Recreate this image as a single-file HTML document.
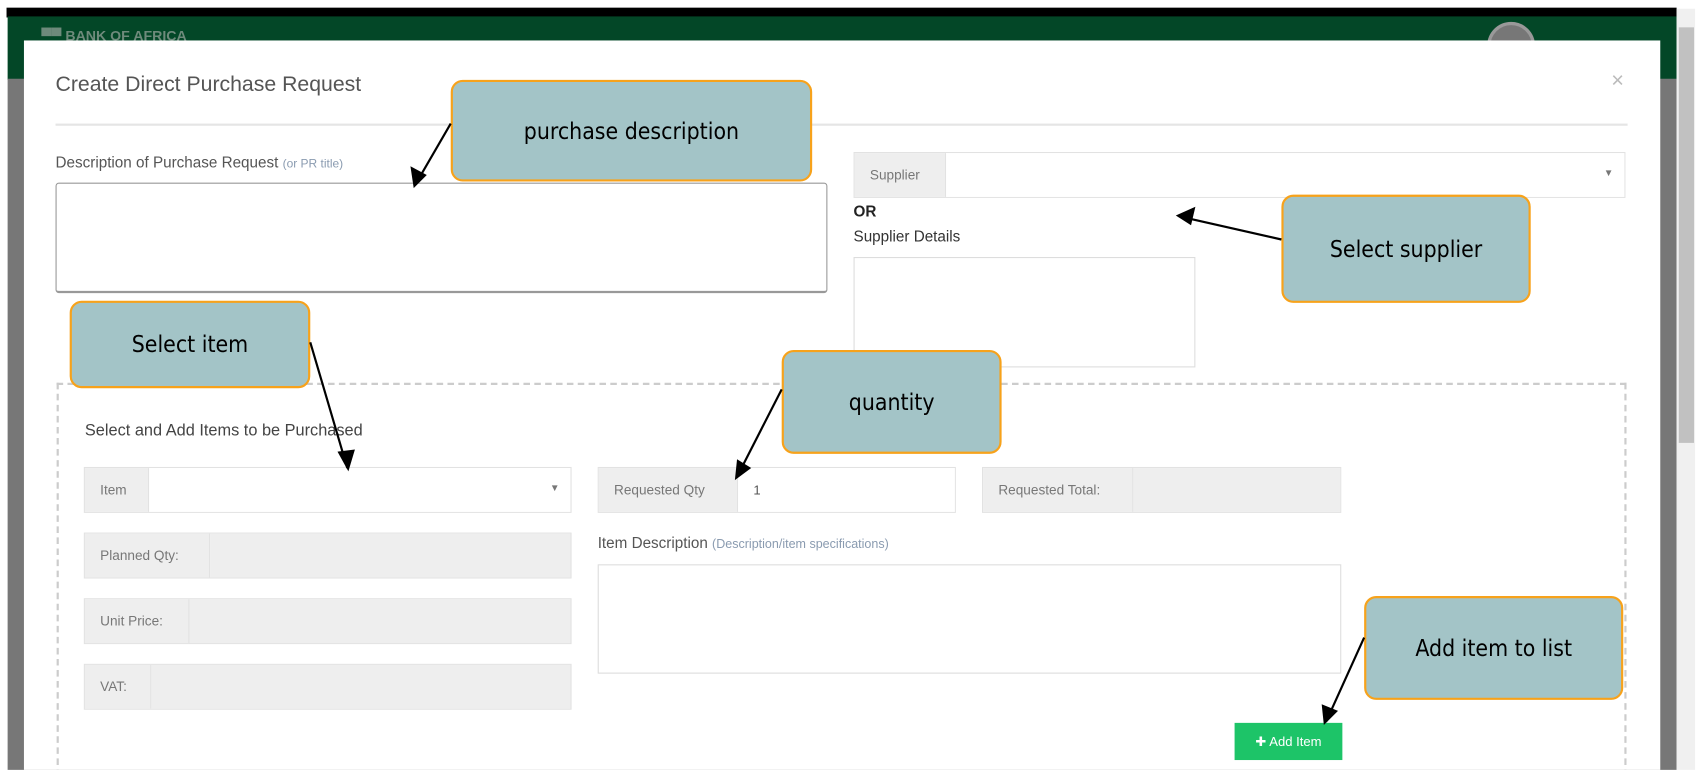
<!DOCTYPE html>
<html><head><meta charset="utf-8"><style>
html,body{margin:0;padding:0;overflow:hidden;background:#fff;width:1707px;height:771px}
#s{position:absolute;left:0;top:0;width:1568px;height:704px;overflow:hidden;transform:scale(1.0887,1.0936);transform-origin:0 0;font-family:"Liberation Sans",sans-serif}
.a{position:absolute;box-sizing:border-box}
.lbl{color:#555;font-size:14px}
.grp{position:absolute;display:flex;border:1px solid #e2e2e2;box-sizing:border-box;height:42px}
.ad{background:#eee;color:#777;font-size:12.5px;display:flex;align-items:center;padding-left:14px;box-sizing:border-box;border-right:1px solid #e2e2e2}
.in{flex:1;background:#fff}
.gin{flex:1;background:#eee}
.co{position:absolute;background:#a3c4c7;border:2px solid #f7a21b;border-radius:11px;box-sizing:border-box;display:flex;align-items:center;justify-content:center;font-size:21px;color:#000;font-family:"DejaVu Sans Condensed","Liberation Sans Narrow","Liberation Sans",sans-serif}
</style></head><body><div id="s">
<div class="a" style="left:6px;top:7px;width:1534px;height:9px;background:#000"></div>
<div class="a" style="left:7px;top:15px;width:1533px;height:58px;background:#034727"></div>
<div class="a" style="left:7px;top:72px;width:1533px;height:640px;background:#777"></div>
<div class="a" style="left:38px;top:25px;color:#6e8a7b;font-size:13px;font-weight:bold">▀▀ BANK OF AFRICA</div>
<div class="a" style="left:1366px;top:20px;width:44px;height:44px;border-radius:50%;background:#777;border:3px solid #999"></div>
<div class="a" style="left:1540px;top:8px;width:17px;height:700px;background:#f0f0f0"></div>
<div class="a" style="left:1542px;top:25px;width:14px;height:380px;background:#c1c1c1"></div>
<div class="a" style="left:22px;top:37px;width:1503px;height:680px;background:#fff"></div>
<div class="a" style="left:51px;top:66px;font-size:19.5px;color:#555">Create Direct Purchase Request</div>
<div class="a" style="left:1480px;top:63px;font-size:20px;color:#bbb">×</div>
<div class="a" style="left:51px;top:113px;width:1444px;height:2px;background:#e5e5e5"></div>
<div class="a lbl" style="left:51px;top:140px">Description of Purchase Request <span style="font-size:11px;color:#8a9bb0">(or PR title)</span></div>
<div class="a" style="left:51px;top:167px;width:709px;height:101px;border:1.5px solid #999;border-radius:3px;border-bottom-width:2px"></div>
<div class="grp" style="left:784px;top:139px;width:709px"><div class="ad" style="width:84px">Supplier</div><div class="in"></div><div class="a" style="right:10px;top:13px;font-size:9px;color:#777">▼</div></div>
<div class="a" style="left:784px;top:185px;font-size:14px;font-weight:bold;color:#222">OR</div>
<div class="a" style="left:784px;top:208px;font-size:14px;color:#333">Supplier Details</div>
<div class="a" style="left:784px;top:235px;width:314px;height:101px;border:1px solid #ddd"></div>
<div class="a" style="left:52px;top:350px;width:1442px;height:400px;border:2px dashed #ccc"></div>
<div class="a" style="left:78px;top:385px;font-size:15px;color:#444">Select and Add Items to be Purchased</div>
<div class="grp" style="left:77px;top:427px;width:448px"><div class="ad" style="width:59px">Item</div><div class="in"></div><div class="a" style="right:10px;top:13px;font-size:9px;color:#777">▼</div></div>
<div class="grp" style="left:549px;top:427px;width:329px"><div class="ad" style="width:128px">Requested Qty</div><div class="in" style="font-size:12px;color:#555;padding:13px 0 0 14px">1</div></div>
<div class="grp" style="left:902px;top:427px;width:330px"><div class="ad" style="width:138px">Requested Total:</div><div class="gin"></div></div>
<div class="grp" style="left:77px;top:487px;width:448px"><div class="ad" style="width:115px">Planned Qty:</div><div class="gin"></div></div>
<div class="grp" style="left:77px;top:547px;width:448px"><div class="ad" style="width:96px">Unit Price:</div><div class="gin"></div></div>
<div class="grp" style="left:77px;top:607px;width:448px"><div class="ad" style="width:61px">VAT:</div><div class="gin"></div></div>
<div class="a lbl" style="left:549px;top:488px">Item Description <span style="font-size:11.5px;color:#8a9bb0">(Description/item specifications)</span></div>
<div class="a" style="left:549px;top:516px;width:683px;height:100px;border:1px solid #ddd"></div>
<div class="a" style="left:1134px;top:661px;width:99px;height:34px;background:#1dc468;color:#fff;font-size:12px;display:flex;align-items:center;justify-content:center">✚ Add Item</div>
<div class="co" style="left:414px;top:73px;width:332px;height:93px">purchase description</div>
<div class="co" style="left:1177px;top:178px;width:229px;height:99px">Select supplier</div>
<div class="co" style="left:64px;top:275px;width:221px;height:80px">Select item</div>
<div class="co" style="left:718px;top:320px;width:202px;height:95px">quantity</div>
<div class="co" style="left:1253px;top:545px;width:238px;height:95px">Add item to list</div>
<svg class="a" style="left:0;top:0" width="1568" height="704">
<g stroke="#000" stroke-width="2">
<line x1="414" y1="113" x2="382" y2="168"/><line x1="1177" y1="219" x2="1084" y2="198"/><line x1="285" y1="313" x2="319" y2="428"/><line x1="718" y1="356" x2="677" y2="436"/><line x1="1253" y1="583" x2="1218" y2="660"/></g>
<g fill="#000"><polygon points="380,172 377,152 392,160"/><polygon points="1080,197 1098,189 1094,206"/><polygon points="320,431 310,413 326,411"/><polygon points="675,439 677,420 690,428"/><polygon points="1216,663 1214,644 1229,650"/></g></svg>
</div></body></html>
